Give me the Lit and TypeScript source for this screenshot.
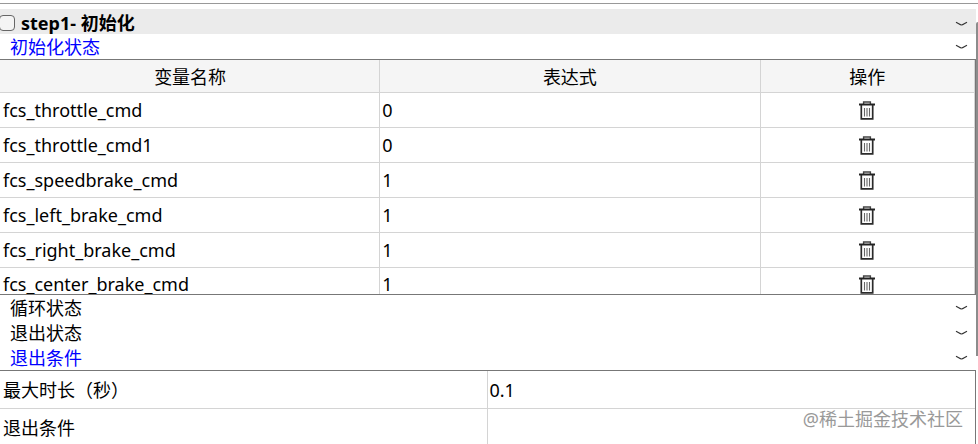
import { LitElement, html, css, svg } from "lit";
import { customElement, state } from "lit/decorators.js";

interface Variable {
  name: string;
  expression: string;
}

const chevron = html`<svg class="chevron" width="13" height="6" viewBox="0 0 13 6" aria-hidden="true">
  ${svg`<path d="M1 1.2 L4.2 3 Q6.5 4.9 8.8 3 L12 1.2" fill="none" stroke="#333" stroke-width="1.1" />`}
</svg>`;

const trash = html`<svg width="16" height="19" viewBox="0 0 16 19" aria-hidden="true">
  ${svg`
    <path d="M4.6 3V1H11.4V3" fill="none" stroke="#444" stroke-width="1.4" />
    <path d="M0 3.5H16" stroke="#222" stroke-width="2" />
    <path d="M2.3 4V17.9H13.7V4" fill="none" stroke="#2b2b2b" stroke-width="1.7" />
    <path d="M5.5 7V15.5M8 7V15.5M10.5 7V15.5" stroke="#666" stroke-width="1.1" />
  `}
</svg>`;

@customElement("app-root")
export class AppRoot extends LitElement {
  @state() private variables: Variable[] = [
    { name: "fcs_throttle_cmd", expression: "0" },
    { name: "fcs_throttle_cmd1", expression: "0" },
    { name: "fcs_speedbrake_cmd", expression: "1" },
    { name: "fcs_left_brake_cmd", expression: "1" },
    { name: "fcs_right_brake_cmd", expression: "1" },
    { name: "fcs_center_brake_cmd", expression: "1" },
  ];

  static styles = css`
    :host {
      display: block;
      position: relative;
      height: 100vh;
      overflow: hidden;
      box-sizing: border-box;
      padding-top: 3px;
      background: #fff;
      color: #000;
      font: 18px/24px "Noto Sans", "Noto Sans CJK SC", sans-serif;
    }
    .panel {
      display: flex;
      border-top: 1px solid #999;
      padding-top: 5px;
    }
    .content {
      flex: 1;
      min-width: 0;
    }
    .track {
      width: 2px;
    }
    .thumb {
      height: 334px;
      margin-top: 13px;
      background: #8c8c8c;
      border-radius: 2px 0 0 0;
    }
    .bar {
      display: flex;
      align-items: center;
      height: 25px;
    }
    .step {
      background: #ebebeb;
      font-weight: 700;
    }
    .step input {
      appearance: none;
      box-sizing: border-box;
      width: 16px;
      height: 16px;
      margin: 2px 6px 0 -1px;
      border: 1px solid #666;
      border-radius: 4px;
      background: #f4f4f4;
    }
    .step label {
      flex: 1;
      padding-top: 2px;
    }
    button {
      border: 0;
      padding: 0;
      background: none;
      color: inherit;
      font: inherit;
      cursor: pointer;
    }
    .toggle {
      display: flex;
      padding: 4px 8px 0 0;
    }
    .section {
      width: 100%;
      justify-content: space-between;
      padding: 0 8px 0 10px;
    }
    .open {
      color: #00f;
    }
    .frame {
      border: solid #777;
      border-width: 1px 1px 1px 0;
      overflow: hidden;
    }
    .variables {
      height: 234px;
    }
    table {
      width: 100%;
      table-layout: fixed;
      border-collapse: separate;
      border-spacing: 0;
    }
    th,
    td {
      box-sizing: border-box;
      padding: 0 2px;
      border: solid #d4d4d4;
      border-width: 0 1px 1px 0;
      font-weight: 400;
      text-align: left;
    }
    th:first-child,
    td:first-child {
      padding-left: 3px;
    }
    thead th {
      height: 33px;
      padding-top: 2px;
      background: #f5f5f5;
      text-align: center;
    }
    .variables td {
      height: 35px;
    }
    .variables tr:last-child td {
      height: 33px;
    }
    .wide {
      width: 39%;
    }
    .remove {
      display: flex;
      margin: 0 auto;
    }
    .exit th,
    .exit td {
      height: 38px;
    }
    .exit td {
      border-right: 0;
    }
    .half {
      width: 50%;
    }
    .watermark {
      position: absolute;
      right: 15px;
      bottom: 13px;
      color: #999;
    }
  `;

  private remove(index: number) {
    this.variables = this.variables.filter((_, i) => i !== index);
  }

  private section(title: string, open: boolean) {
    return html`<button class="bar section ${open ? "open" : ""}" aria-expanded=${open ? "true" : "false"}>
      <span>${title}</span>${chevron}
    </button>`;
  }

  render() {
    return html`
      <div class="panel">
        <main class="content">
          <header class="bar step">
            <input type="checkbox" id="step1" />
            <label for="step1">step1- 初始化</label>
            <button class="toggle" aria-label="step1">${chevron}</button>
          </header>
          ${this.section("初始化状态", true)}
          <div class="frame variables">
            <table>
              <thead>
                <tr>
                  <th class="wide" scope="col">变量名称</th>
                  <th class="wide" scope="col">表达式</th>
                  <th scope="col">操作</th>
                </tr>
              </thead>
              <tbody>
                ${this.variables.map(
                  (v, i) => html`<tr>
                    <td>${v.name}</td>
                    <td>${v.expression}</td>
                    <td>
                      <button class="remove" aria-label="删除" @click=${() => this.remove(i)}>${trash}</button>
                    </td>
                  </tr>`
                )}
              </tbody>
            </table>
          </div>
          ${this.section("循环状态", false)} ${this.section("退出状态", false)}
          ${this.section("退出条件", true)}
          <div class="frame exit">
            <table>
              <tbody>
                <tr>
                  <th class="half" scope="row">最大时长（秒）</th>
                  <td>0.1</td>
                </tr>
                <tr>
                  <th scope="row">退出条件</th>
                  <td></td>
                </tr>
              </tbody>
            </table>
          </div>
        </main>
        <div class="track"><div class="thumb"></div></div>
      </div>
      <div class="watermark">@稀土掘金技术社区</div>
    `;
  }
}
